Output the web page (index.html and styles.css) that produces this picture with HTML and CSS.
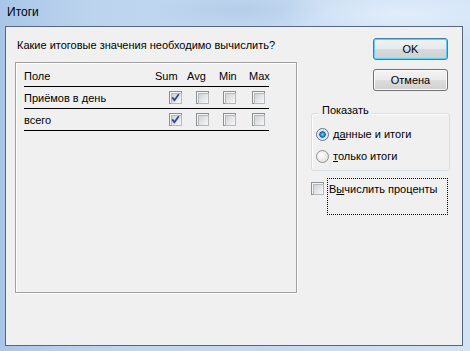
FILE: index.html
```html
<!DOCTYPE html>
<html lang="ru">
<head>
<meta charset="utf-8">
<title>Итоги</title>
<link rel="stylesheet" href="styles.css">
</head>
<body>
<div class="window">
  <div class="titlebar"><span class="title">Итоги</span></div>
  <div class="client">
    <div class="left">
      <div class="prompt">Какие итоговые значения необходимо вычислить?</div>
      <div class="listbox">
        <div class="row head">
          <span>Поле</span>
          <span class="h-sum">Sum</span>
          <span class="h-avg">Avg</span>
          <span class="h-min">Min</span>
          <span class="h-max">Max</span>
        </div>
        <div class="row">
          <span>Приёмов в день</span>
          <span class="cb checked"><svg viewBox="0 0 13 13" width="13" height="13"><polyline points="3.2,6.4 5.4,9.2 9.8,3.2" fill="none" stroke="#34478f" stroke-width="1.8"/></svg></span>
          <span class="cb"></span>
          <span class="cb"></span>
          <span class="cb"></span>
        </div>
        <div class="row">
          <span>всего</span>
          <span class="cb checked"><svg viewBox="0 0 13 13" width="13" height="13"><polyline points="3.2,6.4 5.4,9.2 9.8,3.2" fill="none" stroke="#34478f" stroke-width="1.8"/></svg></span>
          <span class="cb"></span>
          <span class="cb"></span>
          <span class="cb"></span>
        </div>
      </div>
    </div>
    <div class="right">
      <button class="btn btn-default">OK</button>
      <button class="btn btn-cancel">Отмена</button>
      <div class="group">
        <span class="legend">Показать</span>
        <div class="radio-row"><span class="radio on"></span><span>д<u>а</u>нные и итоги</span></div>
        <div class="radio-row"><span class="radio"></span><span><u>т</u>олько итоги</span></div>
      </div>
      <div class="check-row">
        <span class="cb"></span>
        <span class="focus-label">В<u>ы</u>числить проценты</span>
      </div>
    </div>
  </div>
</div>
</body>
</html>
```
FILE: styles.css
```css
* { box-sizing: border-box; }
html, body { margin: 0; padding: 0; }
body {
  width: 470px;
  height: 351px;
  overflow: hidden;
  font-family: "Liberation Sans", Arial, sans-serif;
  font-size: 11px;
  color: #000;
}
.window {
  width: 470px;
  height: 351px;
  display: flex;
  flex-direction: column;
  padding: 0 7px 5px 5px;
  background:
    radial-gradient(ellipse 120px 30px at 400px 14px, rgba(230,241,252,0.8), rgba(230,241,252,0) 100%),
    radial-gradient(ellipse 90px 20px at 240px 10px, rgba(170,198,228,0.6), rgba(170,198,228,0) 100%),
    linear-gradient(90deg, #a9c6e8 0%, #bcd4ee 20%, #c5daf1 60%, #d2e3f5 100%);
}
.titlebar {
  height: 26px;
  display: flex;
  align-items: center;
  padding: 0 0 2px 2px;
}
.title {
  font-size: 12px;
  color: #000;
}
.client {
  flex: 1;
  display: flex;
  border: 1px solid #56667c;
  background: #f0f0f0;
  padding: 11px 0 0 9px;
  gap: 14px;
}
.left {
  width: 282px;
  display: flex;
  flex-direction: column;
}
.prompt {
  height: 14px;
  line-height: 14px;
  padding-left: 2px;
  margin-bottom: 10px;
}
.listbox {
  width: 282px;
  height: 231px;
  border: 1px solid #a0a0a0;
  box-shadow: 1px 1px 0 #fff, inset 1px 1px 0 #fff;
  padding: 2px 0 0 8px;
}
.row {
  width: 245px;
  height: 22px;
  display: grid;
  grid-template-columns: 145px 27px 27px 29px 17px;
  align-items: center;
  border-bottom: 1px solid #000;
  line-height: 14px;
}
.head span { white-space: nowrap; }
.h-sum { margin-left: -14px; }
.h-avg { margin-left: -9px; }
.h-min { margin-left: -4px; }
.h-max { margin-left: -3px; }
.cb {
  position: relative;
  display: block;
  width: 13px;
  height: 13px;
  border: 1px solid #8e8f8f;
  background: #f4f4f4;
}
.cb::before {
  content: "";
  position: absolute;
  left: 1px;
  top: 1px;
  width: 9px;
  height: 9px;
  border: 1px solid #b4b9be;
  background: linear-gradient(135deg, #cfd2d6 0%, #e8e9eb 60%, #f8f8f8 100%);
}
.cb svg {
  position: absolute;
  left: -1px;
  top: -1px;
}
.right {
  width: 139px;
  display: flex;
  flex-direction: column;
}
.btn {
  align-self: flex-end;
  margin-right: 2px;
  width: 75px;
  height: 22px;
  padding: 0;
  font-family: "Liberation Sans", Arial, sans-serif;
  font-size: 11px;
  color: #000;
  border: 1px solid #707070;
  border-radius: 3px;
  background: linear-gradient(180deg, #f3f3f3 0%, #ebebeb 48%, #dddddd 52%, #cfcfcf 100%);
  box-shadow: inset 0 0 0 1px #fbfbfb;
}
.btn-default {
  border-color: #3c7fb1;
  box-shadow: inset 0 0 0 1px #5ed0f5;
  background: linear-gradient(180deg, #eef3f6 0%, #e6eaed 48%, #d6dadd 52%, #cdd1d4 100%);
}
.btn-cancel { margin-top: 9px; }
.group {
  position: relative;
  margin-top: 22px;
  width: 139px;
  height: 58px;
  border: 1px solid #d5dfe5;
  border-radius: 3px;
  box-shadow: inset 1px 1px 0 #fff;
  padding: 9px 0 3px 4px;
}
.legend {
  position: absolute;
  left: 7px;
  top: -11px;
  line-height: 14px;
  padding: 0 3px;
  background: #f0f0f0;
}
.radio-row {
  height: 22px;
  display: flex;
  align-items: center;
  gap: 4px;
}
.radio {
  width: 13px;
  height: 13px;
  border-radius: 50%;
  border: 1px solid #8e8f8f;
  background: radial-gradient(circle at 40% 40%, #ffffff 0%, #f0f0f0 40%, #d3d5d8 100%);
  flex: none;
}
.radio.on {
  border-color: #58789c;
  background: radial-gradient(circle at 50% 50%, #7fe0ff 0%, #2c8ed6 22%, #1d5da0 38%, #cfd6dd 44%, #f4f4f4 70%, #d8dadd 100%);
}
.check-row {
  margin-top: 7px;
  display: flex;
  align-items: flex-start;
  gap: 3px;
}
.check-row .cb { margin-top: 4px; }
.focus-label {
  width: 121px;
  height: 37px;
  border: 1px dotted #000;
  padding: 3px 1px;
  line-height: 14px;
}
u { text-decoration: underline; text-underline-offset: 1px; }
```
